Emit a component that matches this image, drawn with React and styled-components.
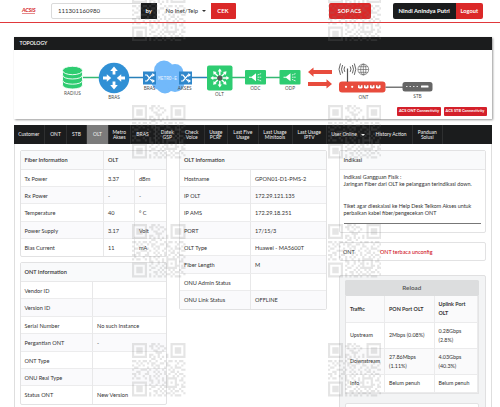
import { Fragment } from "react";
import styled, { createGlobalStyle, css } from "styled-components";

const GlobalStyle = createGlobalStyle`
  * {
    box-sizing: border-box;
  }

  body {
    margin: 0;
    background: #fff;
    color: #333;
    font-family: Lato, "Liberation Sans", sans-serif;
    font-size: 5.6px;
    line-height: 7.3px;
  }
`;

const Page = styled.div`
  position: relative;
  width: 500px;
  height: 407px;
  overflow: hidden;
`;

const Header = styled.header`
  display: flex;
  align-items: flex-start;
  height: 23px;
  padding: 2.5px 16.5px 0 22px;
  border-bottom: 1px solid #e0383b;
`;

const Logo = styled.div`
  width: 29px;
  padding-top: 3.5px;
  color: #d9363a;
  font-size: 5.6px;
  font-weight: 900;
  font-style: italic;
  letter-spacing: -0.2px;

  span {
    display: inline-block;
    line-height: 5.6px;
    border-bottom: 0.6px solid #e58a8c;
  }
`;

const SearchInput = styled.input`
  width: 89.5px;
  height: 16px;
  padding: 0 0 0 6px;
  border: 1px solid #dadada;
  border-radius: 2px 0 0 2px;
  background: #fff;
  color: #333;
  font-family: inherit;
  font-size: 6.05px;
`;

const Tag = styled.div`
  height: 16px;
  width: ${(props) => props.$width}px;
  margin-left: ${(props) => props.$gap || 0}px;
  line-height: 15.5px;
  text-align: center;
  font-size: ${(props) => props.$size || 5.9}px;
  font-weight: 700;
  color: #fff;
  background: ${(props) => (props.$dark ? "#1b1c1d" : "#db2828")};
  border-radius: ${(props) => props.$radius || "0"};
`;

const Dropdown = styled.div`
  display: flex;
  align-items: center;
  width: 53.5px;
  height: 16px;
  padding-left: 8.5px;
  font-size: 5.9px;
  white-space: nowrap;
`;

const Caret = styled.span`
  margin-left: ${(props) => props.$gap}px;
  border: 1.5px solid transparent;
  border-width: 2px 2px 0;
  border-top-color: currentColor;
`;

const Topology = styled.section`
  width: 477.5px;
  height: 82px;
  margin: 14px 0 0 14px;
  background: #fff;
  box-shadow: 0.5px 1px 2px rgba(0, 0, 0, 0.4);
`;

const TopologyTitle = styled.div`
  height: 12.5px;
  padding-left: 5.5px;
  line-height: 12.5px;
  background: #1b1c1d;
  color: #fff;
  font-size: 5.15px;
  font-weight: 600;
`;

const TopologyBody = styled.div`
  display: flex;
  flex-direction: column;
  align-items: flex-end;

  svg {
    display: block;
    width: 477.5px;
    height: 57.5px;
  }
`;

const Connections = styled.div`
  display: flex;
  gap: 2.5px;
  padding-right: 5px;
`;

const ConnectionButton = styled.button`
  width: ${(props) => props.$width}px;
  height: 8.5px;
  padding: 0;
  border: 0;
  border-radius: 1px;
  background: #d4202a;
  color: #fff;
  font-family: inherit;
  font-size: 3.95px;
  line-height: 8px;
  font-weight: 700;
  white-space: nowrap;
`;

const Nav = styled.nav`
  display: flex;
  width: 478.5px;
  height: 19px;
  margin: 6px 0 0 13.5px;
  background: #1b1c1d;
`;

const NavItem = styled.div`
  display: flex;
  align-items: center;
  justify-content: center;
  width: ${(props) => props.$width}px;
  border-right: 0.5px solid #2e2f30;
  background: ${(props) => (props.$active ? "#7b7b7b" : "transparent")};
  color: #f2f2f2;
  font-size: 4.95px;
  line-height: 4.8px;
  text-align: center;
  white-space: pre;
`;

const Content = styled.main`
  display: grid;
  grid-template-columns: 147.5px 147.5px 147.5px;
  column-gap: 12px;
  align-items: start;
  width: 478.5px;
  height: 263px;
  margin-left: 13.5px;
  padding: 6px 0 0 5px;
  border: solid #dedede;
  border-width: 0 1px;
`;

const Column = styled.div`
  display: flex;
  flex-direction: column;
  gap: ${(props) => props.$gap || 5}px;
  min-width: 0;
`;

const Card = styled.div`
  border: 1px solid #e2e2e3;
  border-radius: 2px;
  background: #fff;
`;

const CardTitle = styled.div`
  display: grid;
  grid-template-columns: ${(props) => props.$columns || "1fr"};
  height: 18.5px;
  line-height: 18px;
  background: #f9fafb;
  border-bottom: 1px solid #e8e8e9;
  font-weight: ${(props) => (props.$plain ? 500 : 600)};
`;

const cellBorder = css`
  & + & {
    border-left: 1px solid #e8e8e9;
  }
`;

const Cell = styled.div`
  padding-left: 4px;
  white-space: nowrap;
  ${cellBorder}
`;

const Row = styled.div`
  display: grid;
  grid-template-columns: ${(props) => props.$columns};
  height: 17.4px;
  line-height: 17px;
  border-bottom: 1px solid #ececed;

  &:nth-child(odd) {
    background: #fafafc;
  }

  &:last-child {
    border-bottom: 0;
  }
`;

const Message = styled.div`
  height: 62px;
  padding: 4.5px 4px 0;
  font-size: 5.4px;
  line-height: 7.4px;
  white-space: nowrap;

  p {
    margin: 0 0 14.2px;
  }

  p + p {
    margin-bottom: 5px;
  }
`;

const Rule = styled.div`
  height: 1.3px;
  background: #777;
`;

const OntStatus = styled(Card)`
  display: grid;
  grid-template-columns: 37px 1fr;
  height: 19px;
  padding-left: 3.5px;
  line-height: 18px;
  font-size: 5.4px;

  strong {
    color: #d0101c;
    font-weight: 500;
  }
`;

const TrafficPanel = styled.div`
  height: 150px;
  margin-top: 5px;
  padding: 4.5px 6px 0 5px;
  border: 1px solid #e0e0e1;
  border-radius: 2px;
  background: #f3f4f5;
`;

const ReloadButton = styled.div`
  height: 16px;
  border-radius: 1.5px;
  background: #dcddde;
  color: #555;
  text-align: center;
  font-size: 6.3px;
  line-height: 15.5px;
  font-weight: 600;
`;

const TrafficTable = styled.div`
  display: grid;
  grid-template-columns: 39px 49.5px 1fr;
  grid-template-rows: 27px 26px 26px 17.5px;
  margin: 0 0 9px 0.5px;
  border: solid #e4e4e5;
  border-width: 0 1px 1px;
  background: #fff;
`;

const TrafficCell = styled.div`
  display: flex;
  align-items: center;
  padding-left: 4px;
  border-right: 1px solid #ebebec;
  border-bottom: 1px solid #ebebec;
  background: ${(props) => (props.$shade ? "#fafafb" : "#fff")};
  font-weight: ${(props) => (props.$head ? 700 : 400)};
  line-height: 8.7px;
  font-size: 5.35px;
  white-space: pre;
`;

const NextBox = styled(Card)`
  height: 30px;
`;

const Watermark = styled.svg`
  position: absolute;
  left: ${(props) => props.$x}px;
  top: ${(props) => props.$y}px;
  width: 53.5px;
  height: 53.5px;
  fill: #808080;
  opacity: 0.2;
  pointer-events: none;
`;

const qrRows = [
  "1111111001101000001111111",
  "1000001011010110001000001",
  "1011101001001001001011101",
  "1011101000110010001011101",
  "1011101000011100001011101",
  "1000001011001000101000001",
  "1111111010101010101111111",
  "0000000001100100000000000",
  "1101011010010001011010110",
  "0010100101100110100001001",
  "1001010001011000110010010",
  "0110000100101001001011100",
  "1000111010010010010100011",
  "0011000100101001001101000",
  "1101001100010101010010110",
  "0100010010101000100101001",
  "1011001010010010111110010",
  "0000000011001010100010110",
  "1111111001001001101010001",
  "1000001010010010100011010",
  "1011101001100101111110011",
  "1011101010001010010100100",
  "1011101000110101001011010",
  "1000001010010010110100001",
  "1111111010101101001011100",
];

const qrPath = qrRows
  .flatMap((row, y) =>
    [...row].map((on, x) => (on === "1" ? `M${x} ${y}h1v1h-1z` : ""))
  )
  .join("");

const marks = [-12.5, 105, 224, 343].flatMap((y) =>
  [132, 327.5].map((x) => ({ x, y }))
);

const navItems = [
  { label: "Customer", width: 31.5 },
  { label: "ONT", width: 22 },
  { label: "STB", width: 20 },
  { label: "OLT", width: 22, active: true },
  { label: "Metro\nAkses", width: 21.5 },
  { label: "BRAS", width: 25 },
  { label: "Datek\nGSP", width: 24.5 },
  { label: "Check\nVoice", width: 24.5 },
  { label: "Usage\nPCRF", width: 23.5 },
  { label: "Last Five\nUsage", width: 30.5 },
  { label: "Last Usage\nMinitools", width: 34 },
  { label: "Last Usage\nIPTV", width: 34.5 },
  { label: "User Online", width: 43, caret: true },
  { label: "History Action", width: 43 },
  { label: "Panduan\nSolusi", width: 29.5 },
];

const fiberRows = [
  ["Tx Power", "3.37", "dBm"],
  ["Rx Power", "-", "-"],
  ["Temperature", "40", "° C"],
  ["Power Supply", "3.17", "Volt"],
  ["Bias Current", "11", "mA"],
];

const ontRows = [
  ["Vendor ID", ""],
  ["Version ID", ""],
  ["Serial Number", "No such Instance"],
  ["Pergantian ONT", "-"],
  ["ONT Type", ""],
  ["ONU Real Type", ""],
  ["Status ONT", "New Version"],
];

const oltRows = [
  ["Hostname", "GPON01-D1-PMS-2"],
  ["IP OLT", "172.29.121.135"],
  ["IP AMS", "172.29.18.251"],
  ["PORT", "17/15/3"],
  ["OLT Type", "Huawei - MA5600T"],
  ["Fiber Length", "M"],
  ["ONU Admin Status", ""],
  ["ONU Link Status", "OFFLINE"],
];

const traffic = [
  ["Traffic", "PON Port OLT", "Uplink Port\nOLT"],
  ["Upstream", "2Mbps (0.08%)", "0.28Gbps\n(2.8%)"],
  ["Downstream", "27.86Mbps\n(1.11%)", "4.03Gbps\n(40.3%)"],
  ["Info", "Belum penuh", "Belum penuh"],
];

function InfoTable({ title, columns, rows }) {
  return (
    <Card>
      {title}
      {rows.map((row) => (
        <Row key={row[0]} $columns={columns}>
          {row.map((value, i) => (
            <Cell key={i}>{value}</Cell>
          ))}
        </Row>
      ))}
    </Card>
  );
}

// crossed arrows of a metro switch
function Switch({ x }) {
  return (
    <g transform={`translate(${x} 71)`}>
      <rect width="13" height="13" fill="#2f87cb" />
      <path
        d="M2 3.5h2l5 6h1.5M2 9.5h2l5-6h1.5"
        fill="none"
        stroke="#fff"
        strokeWidth="1.2"
      />
      <path d="M9.3 1.6 12 3.5 9.3 5.4zM9.3 7.6 12 9.5 9.3 11.4z" fill="#fff" />
    </g>
  );
}

function Splitter({ x }) {
  return (
    <g transform={`translate(${x} 69.5)`}>
      <rect width="21" height="14.5" rx="1" fill="#2ecc71" />
      <path d="M4 6.7h2.5L11 3.2v8L6.5 7.8H4z" fill="#fff" />
      <path
        d="M12.5 5 16.5 3.5M12.5 7.2h4M12.5 9.4l4 1.7"
        stroke="#fff"
        strokeWidth="0.8"
        strokeDasharray="1.6 0.5"
      />
    </g>
  );
}

function Diagram() {
  return (
    <svg viewBox="14 49.5 477.5 57.5">
      <path d="M82 77h18" stroke="#35b873" strokeWidth="1.5" />
      <path d="M129 77h14M192 77h16" stroke="#2980b9" strokeWidth="1.5" />
      <path d="M232 77h50" stroke="#35b873" strokeWidth="1.4" />

      <g fill="#2ecc71" stroke="#fff" strokeWidth="0.9">
        <path d="M62.5 81v3.5c0 5.3 20 5.3 20 0V81z" />
        <path d="M62.5 75.5v4.2c0 5.3 20 5.3 20 0v-4.2z" />
        <path d="M62.5 70v4.5c0 5.3 20 5.3 20 0V70z" />
        <ellipse cx="72.5" cy="70" rx="10" ry="4.2" />
      </g>

      <circle cx="114" cy="77.5" r="15.3" fill="#3090d5" />
      {/* up and down arrows point outwards, the side ones inwards */}
      <g fill="#fff">
        <path d="M112.6 74v-3.5h-2.4l3.8-4.5 3.8 4.5h-2.4V74z" />
        <path d="M112.6 81v3.5h-2.4l3.8 4.5 3.8-4.5h-2.4V81z" />
        <path d="M103 76.1h3.8v-2.4l4.4 3.8-4.4 3.8v-2.4H103z" />
        <path d="M125 76.1h-3.8v-2.4l-4.4 3.8 4.4 3.8v-2.4h3.8z" />
      </g>

      <g fill="#72b9fa">
        <circle cx="164" cy="70" r="10" />
        <circle cx="175" cy="72" r="8.5" />
        <circle cx="160" cy="81" r="8.5" />
        <circle cx="165" cy="84" r="9" />
        <circle cx="175" cy="82" r="9.5" />
      </g>
      <Switch x={143} />
      <Switch x={179} />

      <rect x="207" y="65" width="25.5" height="25" rx="2" fill="#2ecc71" />
      {[0, 45, 90, 135, 180, 225, 270, 315].map((angle) => (
        <path
          key={angle}
          d="M219.1 75v-4h-1.4l2.1-3 2.1 3h-1.4v4z"
          fill="#fff"
          transform={`rotate(${angle} 219.8 77.5)`}
        />
      ))}
      <circle cx="219.8" cy="77.5" r="2.6" fill="#555" />

      <Splitter x={245} />
      <Splitter x={279.5} />

      <g fill="#e84c3d">
        <path d="M308 71.6l5.5-4.6v2.6H332v4h-18.5v2.6z" />
        <path d="M332 83.4l-5.5-4.6v2.6H308v4h18.5v2.6z" />
        <rect x="339" y="81" width="46.5" height="11" rx="3" />
      </g>

      <g fill="none" stroke="#555">
        <path d="M347.5 68v13.5" strokeWidth="1.2" />
        <path
          d="M344.8 66q-1.5 2.7 0 5.4M342.6 64.5q-2.2 4.2 0 8.4M340.5 63q-3 5.7 0 11.4M350.2 66q1.5 2.7 0 5.4M352.4 64.5q2.2 4.2 0 8.4M354.3 63q3 5.7 0 11.4"
          strokeWidth="0.9"
        />
        <g strokeWidth="0.6">
          <circle cx="363.3" cy="69" r="5.4" />
          <ellipse cx="363.3" cy="69" rx="2.6" ry="5.4" />
          <path d="M363.3 63.6v10.8M358 69h10.6M358.8 66.2h9M358.8 71.8h9" />
        </g>
        <path d="M385.5 86.7H403" strokeWidth="1.2" />
      </g>
      <g fill="#fff">
        <circle cx="346" cy="86.3" r="1.1" />
        <circle cx="352.2" cy="86.3" r="1.1" />
        {[358, 364, 370, 376].map((x) => (
          <path key={x} d={`M${x} 84.8h4.5v2.3l-1 1h-2.5l-1-1z`} />
        ))}
      </g>
      <g fill="#8d3a32">
        {[358, 364, 370, 376].map((x) => (
          <rect key={x} x={x + 1.5} y="84.8" width="1.5" height="1.2" />
        ))}
      </g>

      <rect x="402.5" y="81.5" width="30" height="9.5" rx="2.5" fill="#666" />
      <path d="M406 86h13" stroke="#ddd" strokeWidth="1.1" strokeDasharray="1.5 2" />
      <rect x="421" y="84.9" width="7.5" height="2" rx="0.5" fill="#fff" />

      <g
        fill="#444"
        fontFamily="'Open Sans', 'Noto Sans', sans-serif"
        fontSize="4.8"
        textAnchor="middle"
      >
        <text x="72.5" y="94.4">RADIUS</text>
        <text x="114" y="98.8">BRAS</text>
        <text x="149.5" y="89.4">BRAS</text>
        <text x="184.8" y="89.4">AKSES</text>
        <text x="219.5" y="95.8">OLT</text>
        <text x="255.3" y="89.6">ODC</text>
        <text x="290" y="89.6">ODP</text>
        <text x="363.5" y="98.8">ONT</text>
        <text x="417.5" y="97.3">STB</text>
        <text
          x="167.5"
          y="79.3"
          fill="#e7f3ff"
          fontSize="5.2"
          fontFamily="'Liberation Mono', monospace"
          textLength="19"
          lengthAdjust="spacingAndGlyphs"
        >
          METRO-E
        </text>
      </g>
    </svg>
  );
}

function App() {
  return (
    <Page>
      <GlobalStyle />
      <Header>
        <Logo>
          <span>ACSIS</span>
        </Logo>
        <SearchInput defaultValue="111301160980" />
        <Tag $dark $width={16.5}>
          by
        </Tag>
        <Dropdown>
          No Inet/Telp
          <Caret $gap={4} />
        </Dropdown>
        <Tag $width={25} $radius="0 1px 1px 0">
          CEK
        </Tag>
        <Tag $width={42} $gap={93} $size={5.8} $radius="2px">
          SOP ACS
        </Tag>
        <Tag $dark $width={62.5} $gap={22.5} $radius="2px 0 0 2px">
          Nindi Anindya Putri
        </Tag>
        <Tag $width={27.5} $size={5.7} $radius="0 2px 2px 0">
          Logout
        </Tag>
      </Header>

      <Topology>
        <TopologyTitle>TOPOLOGY</TopologyTitle>
        <TopologyBody>
          <Diagram />
          <Connections>
            <ConnectionButton $width={44}>ACS ONT Connectivity</ConnectionButton>
            <ConnectionButton $width={43}>ACS STB Connectivity</ConnectionButton>
          </Connections>
        </TopologyBody>
      </Topology>

      <Nav>
        {navItems.map((item) => (
          <NavItem key={item.label} $width={item.width} $active={item.active}>
            {item.label}
            {item.caret && <Caret $gap={4} />}
          </NavItem>
        ))}
      </Nav>

      <Content>
        <Column>
          <InfoTable
            title={
              <CardTitle $columns="82.5px 1fr">
                <Cell>Fiber Information</Cell>
                <Cell>OLT</Cell>
              </CardTitle>
            }
            columns="82.5px 31px 1fr"
            rows={fiberRows}
          />
          <InfoTable
            title={
              <CardTitle>
                <Cell>ONT Information</Cell>
              </CardTitle>
            }
            columns="71.5px 1fr"
            rows={ontRows}
          />
        </Column>

        <Column>
          <InfoTable
            title={
              <CardTitle>
                <Cell>OLT Information</Cell>
              </CardTitle>
            }
            columns="70px 1fr"
            rows={oltRows}
          />
        </Column>

        <Column $gap={9}>
          <Card>
            <CardTitle $plain>
              <Cell>Indikasi</Cell>
            </CardTitle>
            <Message>
              <p>
                Indikasi Gangguan Fisik :<br />
                Jaringan Fiber dari OLT ke pelanggan terindikasi down.
              </p>
              <p>
                Tiket agar dieskalasi ke Help Desk Telkom Akses untuk
                <br />
                perbaikan kabel fiber/pengecekan ONT
              </p>
              <Rule />
            </Message>
          </Card>
          <OntStatus>
            <span>ONT</span>
            <strong>ONT terbaca unconfig</strong>
          </OntStatus>
          <TrafficPanel>
            <ReloadButton>Reload</ReloadButton>
            <TrafficTable>
              {traffic.map((row, i) => (
                <Fragment key={row[0]}>
                  {row.map((value, j) => (
                    <TrafficCell key={j} $head={i === 0} $shade={i % 2 === 0}>
                      {value}
                    </TrafficCell>
                  ))}
                </Fragment>
              ))}
            </TrafficTable>
            <NextBox />
          </TrafficPanel>
        </Column>
      </Content>

      {marks.map((mark) => (
        <Watermark
          key={`${mark.x}-${mark.y}`}
          $x={mark.x}
          $y={mark.y}
          viewBox="0 0 25 25"
        >
          <path d={qrPath} />
        </Watermark>
      ))}
    </Page>
  );
}

export default App;
